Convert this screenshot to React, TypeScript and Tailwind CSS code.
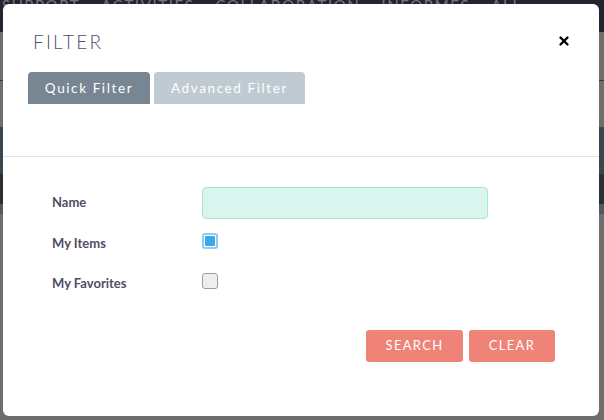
import { X } from "lucide-react";

const Checkbox = ({ checked }: { checked?: boolean }) => {
  return checked ? (
    <div className="w-4 h-4 mb-[6px] rounded-[3px] border-2 border-[#8ccdf2] bg-white p-[1px]">
      <div className="w-full h-full rounded-[1px] bg-[#3aa9e9]"></div>
    </div>
  ) : (
    <div className="w-4 h-4 mb-[6px] rounded-[3px] border border-[#9d9d9f] bg-[#eeeef1]"></div>
  );
};

const Row = ({ label, children }: { label: string; children: React.ReactNode }) => {
  return (
    <div className="flex items-center">
      <div className="w-[150px] text-[13px] font-bold text-[#534d64]">{label}</div>
      {children}
    </div>
  );
};

export default function App() {
  return (
    <div
      className="relative w-[604px] h-[420px] overflow-hidden bg-[#6e6e6e]"
      style={{ fontFamily: "Lato, 'Open Sans', sans-serif" }}
    >
      {/* page behind the overlay */}
      <div className="h-8 bg-[#24242e] flex items-start gap-[21px] pl-[2px] text-[15px] leading-[10px] tracking-[1.6px] text-[#777782] whitespace-nowrap">
        <span>SUPPORT</span>
        <span>ACTIVITIES</span>
        <span>COLLABORATION</span>
        <span>INFORMES</span>
        <span>ALL</span>
      </div>
      <div className="h-[49px] border-b border-[#3a3a3a]"></div>
      <div className="h-[46px]"></div>
      <div className="h-[47px] bg-[#3b464c]"></div>
      <div className="h-[30px] bg-[#2c2f31]"></div>
      <div className="h-[10px] bg-[#505a5f]"></div>

      {/* modal */}
      <div className="absolute left-[3px] top-[4px] w-[596px] h-[412px] rounded-[6px] bg-white">
        <div className="flex justify-between items-start pl-[30px] pr-[28px] pt-[28px]">
          <h1 className="text-[19px] font-light tracking-[2.2px] text-[#534d64] leading-5">FILTER</h1>
          <X className="w-[14px] h-[14px] mt-[2px] text-black" strokeWidth={4} />
        </div>
        <div className="flex gap-1 pl-[25px] mt-[20px]">
          <div className="w-[122px] h-8 rounded-t-[4px] bg-[#778692] text-white text-[13.5px] tracking-[1.6px] flex items-center justify-center">
            Quick Filter
          </div>
          <div className="w-[151px] h-8 rounded-t-[4px] bg-[#c0cad2] text-white text-[13.5px] tracking-[1.6px] flex items-center justify-center">
            Advanced Filter
          </div>
        </div>
        <div className="mt-[52px] border-t border-[#e2e2e2]"></div>

        <div className="pl-[49px] pt-[30px] flex flex-col gap-[10px]">
          <Row label="Name">
            <div className="w-[286px] h-8 rounded-[4px] border border-[#a6e8d5] bg-[#d9f5ed]"></div>
          </Row>
          <div className="h-[30px] flex items-center">
            <Row label="My Items">
              <Checkbox checked />
            </Row>
          </div>
          <div className="h-[30px] flex items-center">
            <Row label="My Favorites">
              <Checkbox />
            </Row>
          </div>
        </div>

        <div className="flex justify-end gap-[6px] pr-[44px] mt-[31px]">
          <button className="w-[97px] h-8 rounded-[3px] bg-[#f08378] text-white text-[13px] tracking-[1.3px]">
            SEARCH
          </button>
          <button className="w-[86px] h-8 rounded-[3px] bg-[#f08378] text-white text-[13px] tracking-[1.3px]">
            CLEAR
          </button>
        </div>
      </div>
    </div>
  );
}
